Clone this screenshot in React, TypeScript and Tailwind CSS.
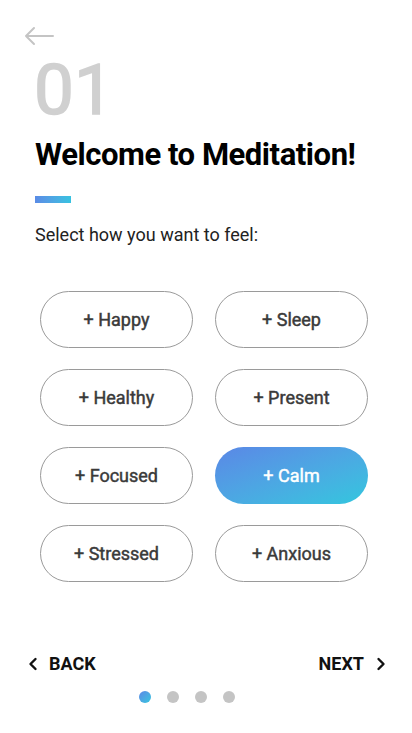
import React, { useState } from "react";

const feelings = [
  "Happy",
  "Sleep",
  "Healthy",
  "Present",
  "Focused",
  "Calm",
  "Stressed",
  "Anxious",
];

function BackArrow() {
  return (
    <svg width="30" height="20" viewBox="0 0 30 20" fill="none">
      <path
        d="M2 10 H29 M10 2 L2 10 L10 18"
        stroke="#c4c4c4"
        strokeWidth="2"
        strokeLinecap="round"
        strokeLinejoin="round"
      />
    </svg>
  );
}

function Chevron({ dir }: { dir: "left" | "right" }) {
  return (
    <svg width="10" height="14" viewBox="0 0 10 14" fill="none">
      <path
        d={dir === "left" ? "M7.5 2 L2.5 7 L7.5 12" : "M2.5 2 L7.5 7 L2.5 12"}
        stroke="#111"
        strokeWidth="2.4"
        strokeLinecap="round"
        strokeLinejoin="round"
      />
    </svg>
  );
}

export default function App() {
  const [selected, setSelected] = useState("Calm");
  const [page] = useState(0);

  return (
    <div className="flex h-[733px] w-[412px] flex-col bg-white font-['Roboto',sans-serif]">
      <div className="ml-[24px] mt-[26px] h-[20px]">
        <BackArrow />
      </div>

      <div className="ml-[34px] mt-[8px] text-[71px] leading-[72px] font-normal text-[#d0d0d0] [-webkit-text-stroke:1.6px_#d0d0d0]">
        01
      </div>

      <h1 className="ml-[35px] mt-[13px] text-[31px] leading-[32px] font-bold tracking-[-0.45px] text-black">
        Welcome to Meditation!
      </h1>

      <div className="ml-[35px] mt-[25px] h-[7px] w-[36px] bg-gradient-to-r from-[#5a8be6] to-[#36c2e0]" />

      <p className="ml-[35px] mt-[23px] text-[18px] leading-[18px] text-[#222]">
        Select how you want to feel:
      </p>

      <div className="ml-[40px] mt-[47px] grid w-[328px] grid-cols-2 gap-x-[22px] gap-y-[21px]">
        {feelings.map((f) => {
          const active = f === selected;
          return (
            <button
              key={f}
              onClick={() => setSelected(f)}
              className={
                active
                  ? "flex h-[57px] items-center justify-center rounded-full bg-gradient-to-br from-[#5a87e6] to-[#31c6de] text-[18px] font-normal text-white [-webkit-text-stroke:0.45px_#ffffff]"
                  : "flex h-[57px] items-center justify-center rounded-full border border-[#9a9a9a] bg-white text-[18px] font-normal text-[#3a3a3a] [-webkit-text-stroke:0.45px_#3a3a3a]"
              }
            >
              + {f}
            </button>
          );
        })}
      </div>

      <div className="mt-auto flex items-center justify-between pl-[28px] pr-[26px]">
        <button className="flex items-center gap-[11px] text-[18px] leading-[18px] font-bold text-[#111]">
          <Chevron dir="left" />
          BACK
        </button>
        <button className="flex items-center gap-[12px] text-[18px] leading-[18px] font-bold text-[#111]">
          NEXT
          <Chevron dir="right" />
        </button>
      </div>

      <div className="mb-[30px] ml-[139px] mt-[18px] flex gap-[16px]">
        {[0, 1, 2, 3].map((i) => (
          <span
            key={i}
            className={
              i === page
                ? "h-[12px] w-[12px] rounded-full bg-gradient-to-br from-[#5a87e6] to-[#31c6de]"
                : "h-[12px] w-[12px] rounded-full bg-[#c4c4c4]"
            }
          />
        ))}
      </div>
    </div>
  );
}
